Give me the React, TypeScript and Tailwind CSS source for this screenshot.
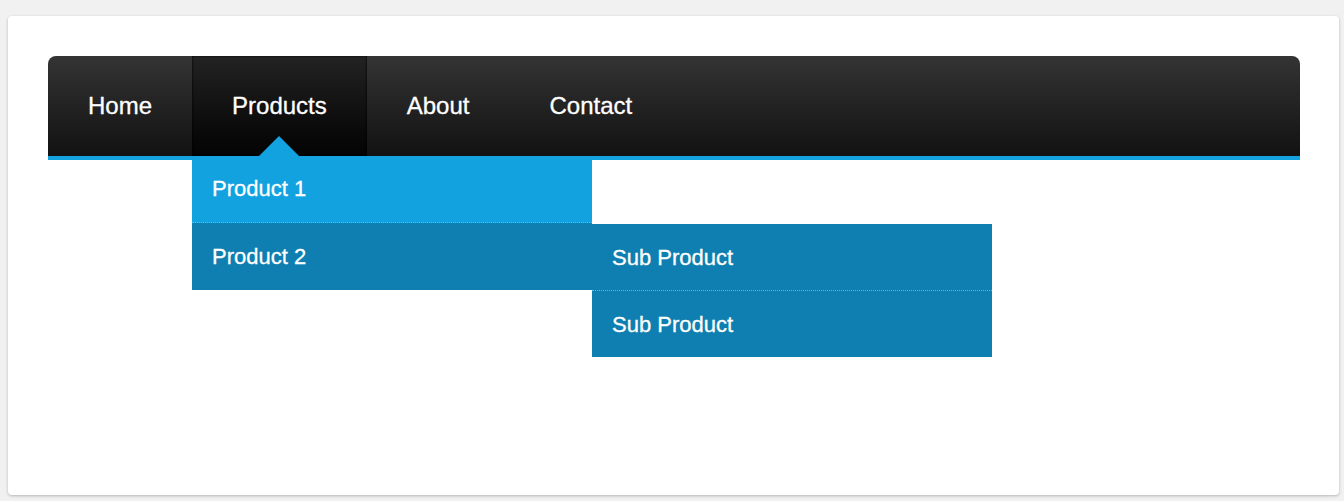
const navItems = ["Home", "Products", "About", "Contact"];

const Dropdown: React.FC = () => {
  return (
    <ul className="absolute left-0 top-full z-10 w-[400px] text-[22px] text-white">
      <li className="flex h-[67px] items-center border-b border-dotted border-[#45bff5] bg-[#12a2e0] pb-[2px] pl-5">
        Product 1
      </li>
      <li className="relative flex h-[67px] items-center bg-[#0e7fb0] pl-5">
        Product 2
        <ul className="absolute left-full top-[1px] w-[400px]">
          <li className="flex h-[67px] items-center border-b border-dotted border-[#45bff5] bg-[#0e7fb0] pl-5">
            Sub Product
          </li>
          <li className="flex h-[66px] items-center bg-[#0e7fb0] pl-5">
            Sub Product
          </li>
        </ul>
      </li>
    </ul>
  );
};

export default function App() {
  return (
    <div className="min-h-screen bg-[#f1f1f1] pt-4 font-['Liberation_Sans',Arial,sans-serif] antialiased [-webkit-text-stroke:0.3px_white]">
      <div className="ml-2 mr-[5px] h-[479px] rounded-[4px] bg-white pb-10 pl-10 pr-[39px] pt-10 shadow-[0_1px_3px_rgba(0,0,0,0.25)]">
        <nav className="relative">
          <ul className="flex h-[104px] rounded-t-[8px] border-b-4 border-[#12a2e0] bg-linear-to-b from-[#343434] to-[#121212]">
            {navItems.map((item) => {
              const active = item === "Products";
              return (
                <li
                  key={item}
                  className={`relative flex h-[100px] items-center px-10 text-[24px] text-white ${
                    active
                      ? "bg-linear-to-b from-[#232323] to-[#040404] shadow-[inset_1px_0_2px_rgba(0,0,0,0.5),inset_-1px_0_2px_rgba(0,0,0,0.5)]"
                      : ""
                  } ${item === "Home" ? "rounded-tl-[8px]" : ""}`}
                >
                  {item}
                  {active && (
                    <>
                      <span className="absolute bottom-0 left-1/2 h-0 w-0 -translate-x-1/2 border-x-[20px] border-b-[20px] border-x-transparent border-b-[#12a2e0]" />
                      <Dropdown />
                    </>
                  )}
                </li>
              );
            })}
          </ul>
        </nav>
      </div>
    </div>
  );
}
